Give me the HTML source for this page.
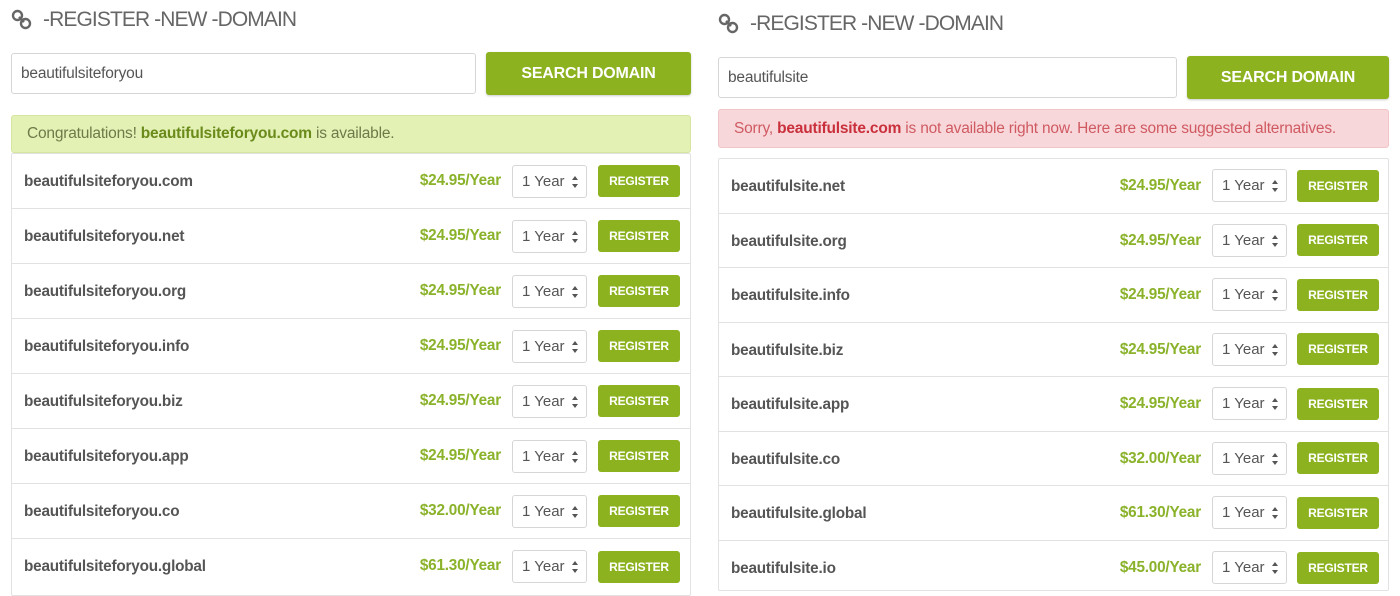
<!DOCTYPE html>
<html><head><meta charset="utf-8"><style>
*{box-sizing:border-box;margin:0;padding:0}
body{width:1400px;height:596px;background:#fff;font-family:"Liberation Sans",sans-serif;color:#555;position:relative;overflow:hidden}
.p{position:absolute}
.h{font-size:21px;color:#666;letter-spacing:-0.9px;display:flex;align-items:center;gap:10px}
.inp{border:1px solid #d6d6d6;border-radius:3px;background:#fff;font-size:15.5px;color:#555;padding-left:9px;display:flex;align-items:center;letter-spacing:-0.2px}
.btn{background:#8cb21f;border-radius:3px;color:#fff;font-weight:bold;font-size:16px;display:flex;align-items:center;justify-content:center;box-shadow:0 1px 2px rgba(0,0,0,.2);letter-spacing:-0.2px}
.al{border-radius:3px;font-size:15.5px;display:flex;align-items:center;padding-left:15px;letter-spacing:-0.2px}
.list{border:1px solid #e2e2e2;border-radius:2px}
.row{display:flex;align-items:center;border-bottom:1px solid #e2e2e2;position:relative}
.row:last-child{border-bottom:none}
.d{font-weight:bold;font-size:15.3px;color:#555;letter-spacing:-0.2px;position:absolute;left:12px;top:19px}
.pr{position:absolute;font-weight:bold;color:#8ab22a;font-size:15.3px;letter-spacing:-0.2px;text-align:right;top:18px}
.sel{position:absolute;width:75px;height:33px;border:1px solid #d6d6d6;border-radius:3px;font-size:15px;color:#555;display:flex;align-items:center;padding-left:9px}
.sel:after{content:"";position:absolute;right:8px;top:10px;border:3.5px solid transparent;border-bottom:4px solid #555;border-top:none}
.sel:before{content:"";position:absolute;right:8px;top:18px;border:3.5px solid transparent;border-top:4px solid #555;border-bottom:none}
.rb{position:absolute;width:82px;height:32px;background:#8cb21f;border-radius:3px;color:#fff;font-weight:bold;font-size:12px;display:flex;align-items:center;justify-content:center;letter-spacing:-0.2px}
</style></head><body>
<div class="p h" style="left:11px;top:8px"><svg width="22" height="22" viewBox="0 0 22 22"><g fill="none" stroke="#666" stroke-width="2.4"><rect x="2" y="2" width="9" height="9" rx="4.5"/><rect x="10" y="10" width="9" height="9" rx="4.5"/><path d="M8 8l5 5"/></g></svg><span>-REGISTER -NEW -DOMAIN</span></div>
<div class="p inp" style="left:11px;top:53px;width:465px;height:41px">beautifulsiteforyou</div>
<div class="p btn" style="left:486px;top:52px;width:205px;height:43px">SEARCH DOMAIN</div>
<div class="p al" style="left:11px;top:115px;width:680px;height:38px;background:#e3f1b5;color:#6e7a48;border:1px solid #d5e6a0">Congratulations!&nbsp;<b style="color:#6a8a1a">beautifulsiteforyou.com</b>&nbsp;is available.</div>
<div class="p list" style="left:11px;top:153px;width:680px;height:443px">
<div class="row" style="height:55px"><span class="d">beautifulsiteforyou.com</span><span class="pr" style="right:189px">$24.95/Year</span><div class="sel" style="left:500px">1 Year</div><div class="rb" style="left:586px">REGISTER</div></div>
<div class="row" style="height:55px"><span class="d">beautifulsiteforyou.net</span><span class="pr" style="right:189px">$24.95/Year</span><div class="sel" style="left:500px">1 Year</div><div class="rb" style="left:586px">REGISTER</div></div>
<div class="row" style="height:55px"><span class="d">beautifulsiteforyou.org</span><span class="pr" style="right:189px">$24.95/Year</span><div class="sel" style="left:500px">1 Year</div><div class="rb" style="left:586px">REGISTER</div></div>
<div class="row" style="height:55px"><span class="d">beautifulsiteforyou.info</span><span class="pr" style="right:189px">$24.95/Year</span><div class="sel" style="left:500px">1 Year</div><div class="rb" style="left:586px">REGISTER</div></div>
<div class="row" style="height:55px"><span class="d">beautifulsiteforyou.biz</span><span class="pr" style="right:189px">$24.95/Year</span><div class="sel" style="left:500px">1 Year</div><div class="rb" style="left:586px">REGISTER</div></div>
<div class="row" style="height:55px"><span class="d">beautifulsiteforyou.app</span><span class="pr" style="right:189px">$24.95/Year</span><div class="sel" style="left:500px">1 Year</div><div class="rb" style="left:586px">REGISTER</div></div>
<div class="row" style="height:55px"><span class="d">beautifulsiteforyou.co</span><span class="pr" style="right:189px">$32.00/Year</span><div class="sel" style="left:500px">1 Year</div><div class="rb" style="left:586px">REGISTER</div></div>
<div class="row" style="height:55px"><span class="d">beautifulsiteforyou.global</span><span class="pr" style="right:189px">$61.30/Year</span><div class="sel" style="left:500px">1 Year</div><div class="rb" style="left:586px">REGISTER</div></div>
</div>

<div class="p h" style="left:718px;top:12px"><svg width="22" height="22" viewBox="0 0 22 22"><g fill="none" stroke="#666" stroke-width="2.4"><rect x="2" y="2" width="9" height="9" rx="4.5"/><rect x="10" y="10" width="9" height="9" rx="4.5"/><path d="M8 8l5 5"/></g></svg><span>-REGISTER -NEW -DOMAIN</span></div>
<div class="p inp" style="left:718px;top:57px;width:459px;height:41px">beautifulsite</div>
<div class="p btn" style="left:1187px;top:56px;width:202px;height:43px">SEARCH DOMAIN</div>
<div class="p al" style="left:718px;top:109px;width:671px;height:39px;background:#f8d7da;color:#cf5a62;border:1px solid #f1c4c8">Sorry,&nbsp;<b style="color:#c9303b">beautifulsite.com</b>&nbsp;is not available right now. Here are some suggested alternatives.</div>
<div class="p list" style="left:718px;top:158px;width:671px;height:433px">
<div class="row" style="height:54.5px"><span class="d">beautifulsite.net</span><span class="pr" style="right:187px">$24.95/Year</span><div class="sel" style="left:493px">1 Year</div><div class="rb" style="left:578px">REGISTER</div></div>
<div class="row" style="height:54.5px"><span class="d">beautifulsite.org</span><span class="pr" style="right:187px">$24.95/Year</span><div class="sel" style="left:493px">1 Year</div><div class="rb" style="left:578px">REGISTER</div></div>
<div class="row" style="height:54.5px"><span class="d">beautifulsite.info</span><span class="pr" style="right:187px">$24.95/Year</span><div class="sel" style="left:493px">1 Year</div><div class="rb" style="left:578px">REGISTER</div></div>
<div class="row" style="height:54.5px"><span class="d">beautifulsite.biz</span><span class="pr" style="right:187px">$24.95/Year</span><div class="sel" style="left:493px">1 Year</div><div class="rb" style="left:578px">REGISTER</div></div>
<div class="row" style="height:54.5px"><span class="d">beautifulsite.app</span><span class="pr" style="right:187px">$24.95/Year</span><div class="sel" style="left:493px">1 Year</div><div class="rb" style="left:578px">REGISTER</div></div>
<div class="row" style="height:54.5px"><span class="d">beautifulsite.co</span><span class="pr" style="right:187px">$32.00/Year</span><div class="sel" style="left:493px">1 Year</div><div class="rb" style="left:578px">REGISTER</div></div>
<div class="row" style="height:54.5px"><span class="d">beautifulsite.global</span><span class="pr" style="right:187px">$61.30/Year</span><div class="sel" style="left:493px">1 Year</div><div class="rb" style="left:578px">REGISTER</div></div>
<div class="row" style="height:54.5px"><span class="d">beautifulsite.io</span><span class="pr" style="right:187px">$45.00/Year</span><div class="sel" style="left:493px">1 Year</div><div class="rb" style="left:578px">REGISTER</div></div>
</div>
</body></html>
